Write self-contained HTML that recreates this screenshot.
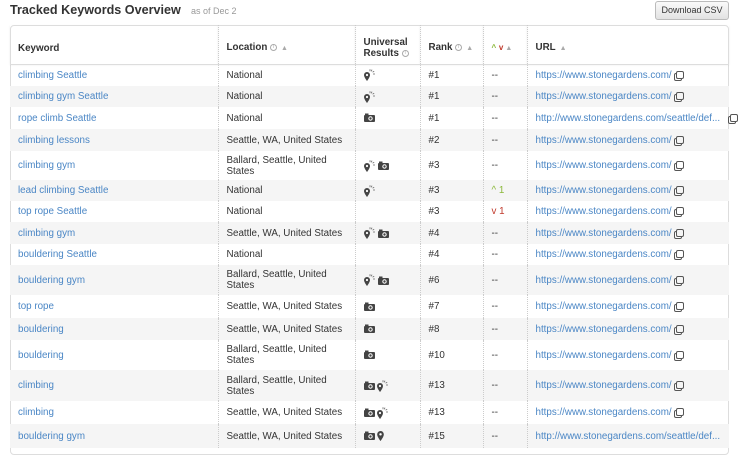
<!DOCTYPE html>
<html><head><meta charset="utf-8"><style>
*{margin:0;padding:0;box-sizing:border-box}
body{width:738px;height:448px;overflow:hidden;background:#fff;font-family:"Liberation Sans",Arial,sans-serif;font-size:9.8px;color:#333;position:relative}
.title{position:absolute;left:10px;top:3px;font-size:12.6px;font-weight:bold;color:#333}
.asof{position:absolute;left:191px;top:6px;font-size:9px;color:#999}
.btn{position:absolute;left:655px;top:1px;width:74px;height:19px;border:1px solid #bbb;border-radius:3px;background:linear-gradient(#fafafa,#e2e2e2);font-size:9px;color:#333;text-align:center;line-height:17px}
table{position:absolute;left:10px;top:25px;border-collapse:collapse;table-layout:fixed;width:719px}
.wrap{position:absolute;left:10px;top:25px;width:719px;height:430px;border:1px solid #ddd;border-radius:4px}
td,th{border-left:1px dotted #ccc;padding:0 8px;vertical-align:middle;text-align:left;line-height:11px}
td:first-child,th:first-child{border-left:none}
th{font-weight:bold;height:39px;padding-top:8px;border-bottom:1px solid #ddd;box-shadow:0 1px 2px rgba(0,0,0,.08)}
tr.g td{background:#f5f5f5}
a{color:#4a86c5;text-decoration:none}
.i{display:inline-block;width:7px;height:7px;border:1px solid #aaa;border-radius:50%;font-size:5px;line-height:5px;text-align:center;color:#aaa;vertical-align:middle;font-weight:normal}
.s{color:#aaa;font-size:7px;margin-left:4px}
.cp{display:inline-block;width:8px;height:8px;border:1px solid #555;border-radius:2px;margin-left:4px;vertical-align:-1px;box-shadow:-2px 2px 0 -1px #fff,-2px 2px 0 0 #555}
svg{vertical-align:middle}
.up{color:#8bb83a}.dn{color:#c0392b}
</style></head><body>
<div class="title">Tracked Keywords Overview</div>
<div class="asof">as of Dec 2</div>
<div class="btn">Download CSV</div>
<div class="wrap"></div>
<svg width="0" height="0" style="position:absolute"><defs>
<g id="pin"><path d="M3 3a3 3 0 0 1 3 3c0 2.2-3 6-3 6s-3-3.8-3-6A3 3 0 0 1 3 3z" fill="#444"/><circle cx="3" cy="6" r="1.1" fill="#fff"/><path d="M6 0.3v2M8 0.6l-.7 1.7M10.2 2.2l-1.6 1M11 5h-2" stroke="#666" stroke-width=".8"/></g>
<g id="cam"><rect x="0" y="2" width="11" height="7" rx="1" fill="#444"/><rect x="1" y="0.5" width="3.5" height="2" fill="#444"/><circle cx="6.5" cy="5.5" r="2.2" fill="#fff"/><circle cx="6.5" cy="5.5" r="1.2" fill="#444"/></g>
</defs></svg>
<table>
<colgroup><col style="width:208px"><col style="width:137px"><col style="width:65px"><col style="width:63px"><col style="width:44px"><col style="width:202px"></colgroup>
<tr><th>Keyword</th><th>Location <span class="i">i</span><span class="s">▲</span></th><th>Universal<br>Results <span class="i">i</span></th><th>Rank <span class="i">i</span><span class="s">▲</span></th><th><span class="up" style="font-size:8px">^</span> <span class="dn" style="font-size:8px">v</span><span class="s" style="margin-left:2px">▲</span></th><th>URL<span class="s">▲</span></th></tr>
<tr style="height:22px"><td><a>climbing Seattle</a></td><td>National</td><td><svg width="12" height="12" viewBox="0 0 12 12"><use href="#pin"/></svg></td><td>#1</td><td>--</td><td><a>https://www.stonegardens.com/</a><span class="cp"></span></td></tr>
<tr class="g" style="height:21px"><td><a>climbing gym Seattle</a></td><td>National</td><td><svg width="12" height="12" viewBox="0 0 12 12"><use href="#pin"/></svg></td><td>#1</td><td>--</td><td><a>https://www.stonegardens.com/</a><span class="cp"></span></td></tr>
<tr style="height:22px"><td><a>rope climb Seattle</a></td><td>National</td><td><svg width="11" height="9" viewBox="0 0 11 9"><use href="#cam"/></svg></td><td>#1</td><td>--</td><td style="white-space:nowrap;overflow:visible"><a>http://www.stonegardens.com/seattle/def...</a><span class="cp" style="margin-left:10px"></span></td></tr>
<tr class="g" style="height:22px"><td><a>climbing lessons</a></td><td>Seattle, WA, United States</td><td></td><td>#2</td><td>--</td><td><a>https://www.stonegardens.com/</a><span class="cp"></span></td></tr>
<tr style="height:29px"><td><a>climbing gym</a></td><td>Ballard, Seattle, United States</td><td><svg width="12" height="12" viewBox="0 0 12 12"><use href="#pin"/></svg> <svg width="11" height="9" viewBox="0 0 11 9"><use href="#cam"/></svg></td><td>#3</td><td>--</td><td><a>https://www.stonegardens.com/</a><span class="cp"></span></td></tr>
<tr class="g" style="height:21px"><td><a>lead climbing Seattle</a></td><td>National</td><td><svg width="12" height="12" viewBox="0 0 12 12"><use href="#pin"/></svg></td><td>#3</td><td><span class="up">^ 1</span></td><td><a>https://www.stonegardens.com/</a><span class="cp"></span></td></tr>
<tr style="height:21px"><td><a>top rope Seattle</a></td><td>National</td><td></td><td>#3</td><td><span class="dn">v 1</span></td><td><a>https://www.stonegardens.com/</a><span class="cp"></span></td></tr>
<tr class="g" style="height:22px"><td><a>climbing gym</a></td><td>Seattle, WA, United States</td><td><svg width="12" height="12" viewBox="0 0 12 12"><use href="#pin"/></svg> <svg width="11" height="9" viewBox="0 0 11 9"><use href="#cam"/></svg></td><td>#4</td><td>--</td><td><a>https://www.stonegardens.com/</a><span class="cp"></span></td></tr>
<tr style="height:21px"><td><a>bouldering Seattle</a></td><td>National</td><td></td><td>#4</td><td>--</td><td><a>https://www.stonegardens.com/</a><span class="cp"></span></td></tr>
<tr class="g" style="height:30px"><td><a>bouldering gym</a></td><td>Ballard, Seattle, United States</td><td><svg width="12" height="12" viewBox="0 0 12 12"><use href="#pin"/></svg> <svg width="11" height="9" viewBox="0 0 11 9"><use href="#cam"/></svg></td><td>#6</td><td>--</td><td><a>https://www.stonegardens.com/</a><span class="cp"></span></td></tr>
<tr style="height:23px"><td><a>top rope</a></td><td>Seattle, WA, United States</td><td><svg width="11" height="9" viewBox="0 0 11 9"><use href="#cam"/></svg></td><td>#7</td><td>--</td><td><a>https://www.stonegardens.com/</a><span class="cp"></span></td></tr>
<tr class="g" style="height:22px"><td><a>bouldering</a></td><td>Seattle, WA, United States</td><td><svg width="11" height="9" viewBox="0 0 11 9"><use href="#cam"/></svg></td><td>#8</td><td>--</td><td><a>https://www.stonegardens.com/</a><span class="cp"></span></td></tr>
<tr style="height:30px"><td><a>bouldering</a></td><td>Ballard, Seattle, United States</td><td><svg width="11" height="9" viewBox="0 0 11 9"><use href="#cam"/></svg></td><td>#10</td><td>--</td><td><a>https://www.stonegardens.com/</a><span class="cp"></span></td></tr>
<tr class="g" style="height:31px"><td><a>climbing</a></td><td>Ballard, Seattle, United States</td><td><svg width="11" height="9" viewBox="0 0 11 9"><use href="#cam"/></svg> <svg width="12" height="12" viewBox="0 0 12 12"><use href="#pin"/></svg></td><td>#13</td><td>--</td><td><a>https://www.stonegardens.com/</a><span class="cp"></span></td></tr>
<tr style="height:23px"><td><a>climbing</a></td><td>Seattle, WA, United States</td><td><svg width="11" height="9" viewBox="0 0 11 9"><use href="#cam"/></svg> <svg width="12" height="12" viewBox="0 0 12 12"><use href="#pin"/></svg></td><td>#13</td><td>--</td><td><a>https://www.stonegardens.com/</a><span class="cp"></span></td></tr>
<tr class="g" style="height:24px"><td><a>bouldering gym</a></td><td>Seattle, WA, United States</td><td><svg width="11" height="9" viewBox="0 0 11 9"><use href="#cam"/></svg> <svg width="7" height="10" viewBox="0 3 6 9"><path d="M3 3a3 3 0 0 1 3 3c0 2.2-3 6-3 6s-3-3.8-3-6A3 3 0 0 1 3 3z" fill="#444"/><circle cx="3" cy="6" r="1.1" fill="#fff"/></svg></td><td>#15</td><td>--</td><td style="white-space:nowrap"><a>http://www.stonegardens.com/seattle/def...</a></td></tr>
</table>
</body></html>
